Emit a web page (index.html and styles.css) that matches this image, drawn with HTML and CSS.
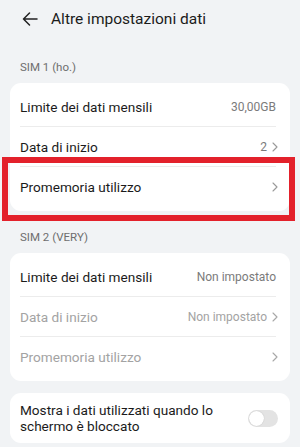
FILE: index.html
```
<!DOCTYPE html>
<html lang=it><head>
<meta charset=UTF-8>
<meta name=viewport content="width=device-width,initial-scale=1">
<title>Altre impostazioni dati</title><link rel="stylesheet" href="styles.css"></head><body>
<div class=page>
<div class=topbar>
<svg class=back viewBox="0 0 16 14" width=16 height=14><path d="M15 7H1.5M7.5 1L1.5 7l6 6" fill=none stroke="#222" stroke-width="1.5" stroke-linecap=round stroke-linejoin=round /></svg>
<h1>Altre impostazioni dati</h1>
</div>
<div class=label>SIM 1 (ho.)</div>
<div class="card hl-wrap">
<div class=row><span class=name>Limite dei dati mensili</span><span class=val>30,00GB</span></div>
<div class=row><span class=name>Data di inizio</span><span class="val ch">2<svg class=chev viewBox="0 0 6 10" width=6 height=10><path d="M1 1l4 4-4 4" fill=none stroke="#9a9a9a" stroke-width="1.1" stroke-linecap=round stroke-linejoin=round /></svg></span></div>
<div class="row last"><span class=name>Promemoria utilizzo</span><span class="val ch"><svg class=chev viewBox="0 0 6 10" width=6 height=10><path d="M1 1l4 4-4 4" fill=none stroke="#9a9a9a" stroke-width="1.1" stroke-linecap=round stroke-linejoin=round /></svg></span></div>
<div class=highlight></div>
</div>
<div class="label l2">SIM 2 (VERY)</div>
<div class=card>
<div class=row><span class=name>Limite dei dati mensili</span><span class=val>Non impostato</span></div>
<div class="row off"><span class=name>Data di inizio</span><span class="val ch">Non impostato<svg class=chev viewBox="0 0 6 10" width=6 height=10><path d="M1 1l4 4-4 4" fill=none stroke="#a8a8a8" stroke-width="1.1" stroke-linecap=round stroke-linejoin=round /></svg></span></div>
<div class="row off last"><span class=name>Promemoria utilizzo</span><span class="val ch"><svg class=chev viewBox="0 0 6 10" width=6 height=10><path d="M1 1l4 4-4 4" fill=none stroke="#a8a8a8" stroke-width="1.1" stroke-linecap=round stroke-linejoin=round /></svg></span></div>
</div>
<div class="card c3">
<div class="row tall last"><span class=name>Mostra i dati utilizzati quando lo schermo è bloccato</span><span class=toggle></span></div>
</div>
</div>
</body></html>
```
FILE: styles.css
```
body{margin:0;background:#f1f3f5;font-family:Roboto,"Noto Sans",sans-serif;color:#1b1b1b}
.page{width:300px;height:447px;overflow:hidden}
.topbar{display:flex;align-items:center;height:38px;padding-left:22px}
.back{margin-right:13px}
h1{font-size:15.5px;font-weight:400;margin:0;color:#1b1b1b}
.label{font-size:11.5px;color:#6e6e6e;padding:22px 0 0 20px;height:23px;line-height:14px}
.l2{padding-top:19px}
.card{background:#fff;border-radius:11px;margin:0 10px;padding:4px 0}
.hl-wrap{position:relative}
.row{display:flex;align-items:center;justify-content:space-between;height:40px;margin:0 14px 0 10px;border-bottom:1px solid #ececec;box-sizing:border-box;font-size:13.6px}
.row.last{border-bottom:none}
.val{font-size:12px;color:#7b7b7b;display:flex;align-items:center}
.val.ch{margin-right:-2px}
.chev{margin-left:5px}
.off .name,.off .val{color:#a3a3a3}
.c3{margin-top:12px;padding:0}
.tall{height:50px;line-height:16px}
.tall .name{width:215px}
.toggle{width:30px;height:17px;border-radius:9px;background:#e3e3e3;position:relative;margin-right:-2px}
.toggle::after{content:"";position:absolute;left:1px;top:1px;width:15px;height:15px;border-radius:50%;background:#fff;box-shadow:0 0 1px rgba(0,0,0,.25)}
.highlight{position:absolute;left:-8px;right:-5px;top:74px;height:64px;border:6px solid #e3212b;box-sizing:border-box}
```
